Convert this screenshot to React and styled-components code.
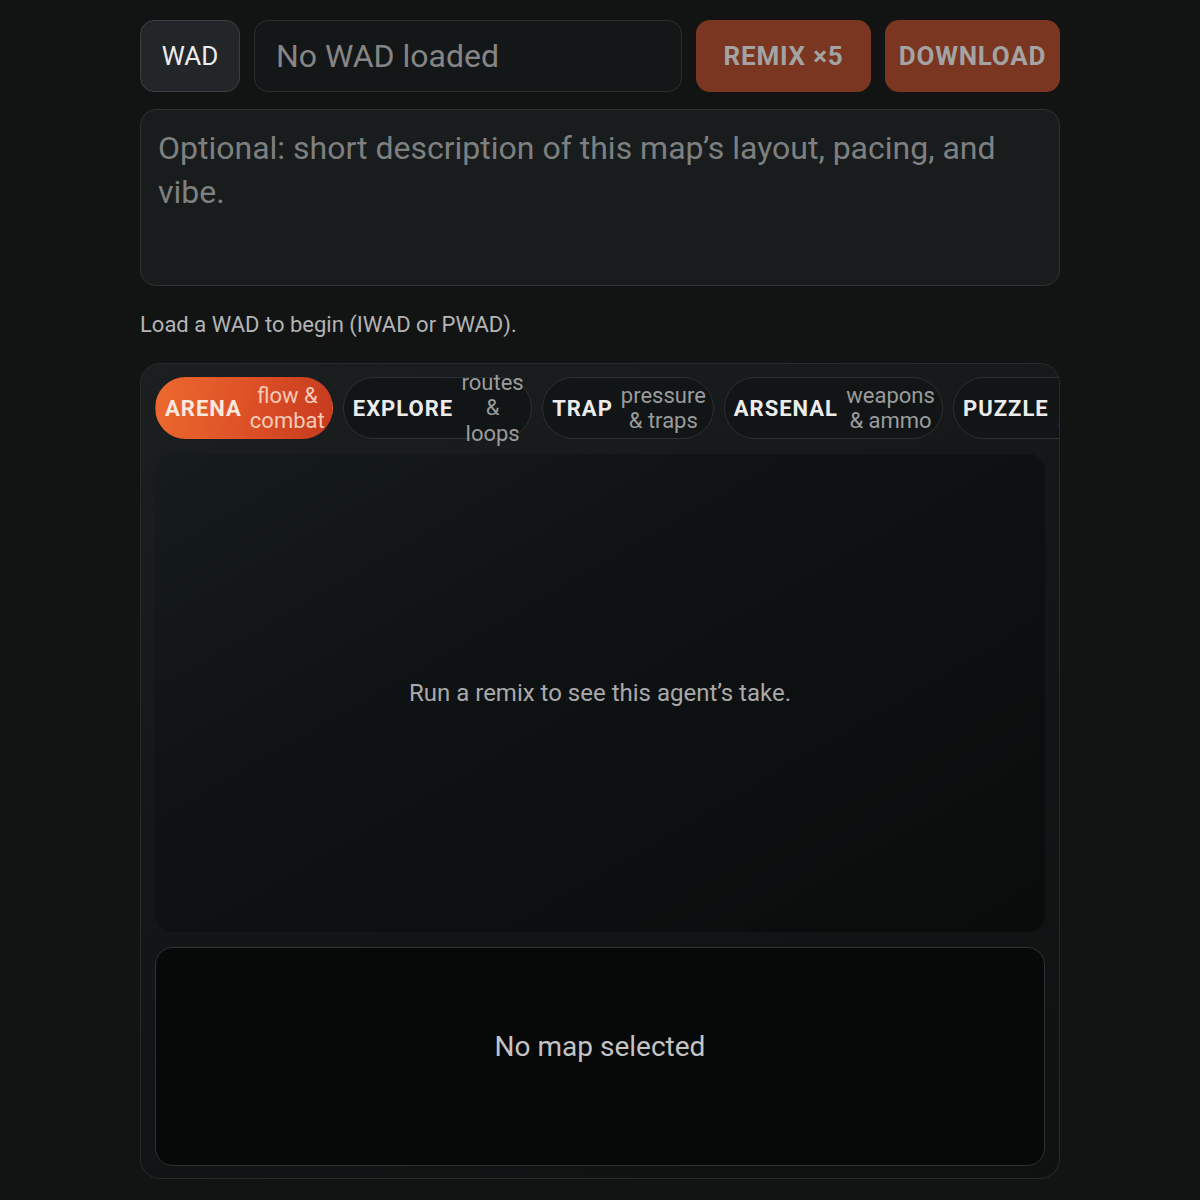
import React from "react";
import styled, { createGlobalStyle } from "styled-components";

const GlobalStyle = createGlobalStyle`
  html, body {
    margin: 0;
    padding: 0;
    background: #121414;
  }
  body {
    font-family: Roboto, "Noto Sans", "Liberation Sans", sans-serif;
    color: #e6e6e6;
  }
  * { box-sizing: border-box; }
`;

const Page = styled.div`
  width: 920px;
  margin: 20px auto 0;
  display: flex;
  flex-direction: column;
`;

const Toolbar = styled.div`
  display: flex;
  align-items: stretch;
  gap: 14px;
  height: 72px;
`;

const FileButton = styled.button`
  width: 100px;
  border-radius: 14px;
  background: #222628;
  border: 1px solid #3a3f42;
  color: #ececec;
  font-family: inherit;
  font-size: 26px;
  cursor: pointer;
`;

const FileName = styled.div`
  flex: 1;
  display: flex;
  align-items: center;
  padding: 0 21px;
  border-radius: 14px;
  background: #141718;
  border: 1px solid #2a2e30;
  color: #858585;
  font-size: 32px;
`;

const ActionButton = styled.button`
  width: 175px;
  border: none;
  border-radius: 14px;
  background: #7a3620;
  color: #a3a3a3;
  font-family: inherit;
  font-weight: 700;
  font-size: 26px;
  letter-spacing: 0.8px;
  cursor: not-allowed;
`;

const Notes = styled.textarea`
  margin-top: 17px;
  height: 177px;
  resize: none;
  border-radius: 16px;
  background: #181c1d;
  border: 1px solid #2e3234;
  padding: 16px 17px;
  font-family: inherit;
  font-size: 32px;
  line-height: 44px;
  color: #dcdcdc;
  outline: none;
  &::placeholder {
    color: #7e8080;
  }
`;

const Status = styled.p`
  margin: 26px 0 0;
  font-size: 22px;
  line-height: 26px;
  color: #b4b4b4;
`;

const Panel = styled.section`
  margin-top: 25px;
  height: 816px;
  border-radius: 20px;
  border: 1px solid #262a2c;
  background: linear-gradient(160deg, #1b1f20 0%, #131617 45%, #0f1111 100%);
  padding: 13px 13px 12px 14px;
  display: flex;
  flex-direction: column;
  gap: 15px;
  overflow: hidden;
`;

const TabRow = styled.div`
  display: flex;
  gap: 10px;
  flex-wrap: nowrap;
  margin-right: -14px;
`;

const Tab = styled.button`
  flex-shrink: 0;
  height: 62px;
  display: flex;
  align-items: center;
  gap: 8px;
  padding: 0 7px 0 9px;
  border-radius: 31px;
  font-family: inherit;
  cursor: pointer;
  border: 1px solid ${(p) => (p.$active ? "transparent" : "#2c3032")};
  background: ${(p) =>
    p.$active
      ? "linear-gradient(100deg, #ec6a2e 0%, #dc4f26 55%, #c63a1f 100%)"
      : "#121516"};
`;

const TabName = styled.span`
  font-size: 22px;
  font-weight: 700;
  letter-spacing: 1px;
  color: ${(p) => (p.$active ? "#fbe9e0" : "#ececec")};
`;

const TabHint = styled.span`
  width: ${(p) => p.$w}px;
  font-size: 22px;
  line-height: 25.5px;
  text-align: center;
  color: ${(p) => (p.$active ? "#f6cbb8" : "#9a9c9c")};
`;

const Preview = styled.div`
  height: 478px;
  flex-shrink: 0;
  border-radius: 16px;
  background: linear-gradient(150deg, #161b1c 0%, #0f1213 40%, #0a0c0c 100%);
  display: flex;
  align-items: center;
  justify-content: center;
  font-size: 24px;
  color: #a9a9a9;
  margin-right: 1px;
`;

const MapBox = styled.div`
  flex: 1;
  border-radius: 18px;
  border: 1px solid #2e3234;
  background: #070909;
  display: flex;
  align-items: center;
  justify-content: center;
  padding-bottom: 20px;
  font-size: 28px;
  color: #c4c4c4;
  margin-right: 1px;
`;

const agents = [
  { name: "ARENA", hint: "flow & combat", w: 75 },
  { name: "EXPLORE", hint: "routes & loops", w: 63 },
  { name: "TRAP", hint: "pressure & traps", w: 85 },
  { name: "ARSENAL", hint: "weapons & ammo", w: 89 },
  { name: "PUZZLE", hint: "keys & switches", w: 89 },
];

export default function App() {
  const active = "ARENA";
  return (
    <>
      <GlobalStyle />
      <Page>
        <Toolbar>
          <FileButton>WAD</FileButton>
          <FileName>No WAD loaded</FileName>
          <ActionButton disabled>REMIX ×5</ActionButton>
          <ActionButton disabled>DOWNLOAD</ActionButton>
        </Toolbar>
        <Notes placeholder="Optional: short description of this map’s layout, pacing, and vibe." />
        <Status>Load a WAD to begin (IWAD or PWAD).</Status>
        <Panel>
          <TabRow>
            {agents.map((a) => (
              <Tab key={a.name} $active={a.name === active}>
                <TabName $active={a.name === active}>{a.name}</TabName>
                <TabHint $active={a.name === active} $w={a.w}>
                  {a.hint}
                </TabHint>
              </Tab>
            ))}
          </TabRow>
          <Preview>Run a remix to see this agent’s take.</Preview>
          <MapBox>No map selected</MapBox>
        </Panel>
      </Page>
    </>
  );
}
